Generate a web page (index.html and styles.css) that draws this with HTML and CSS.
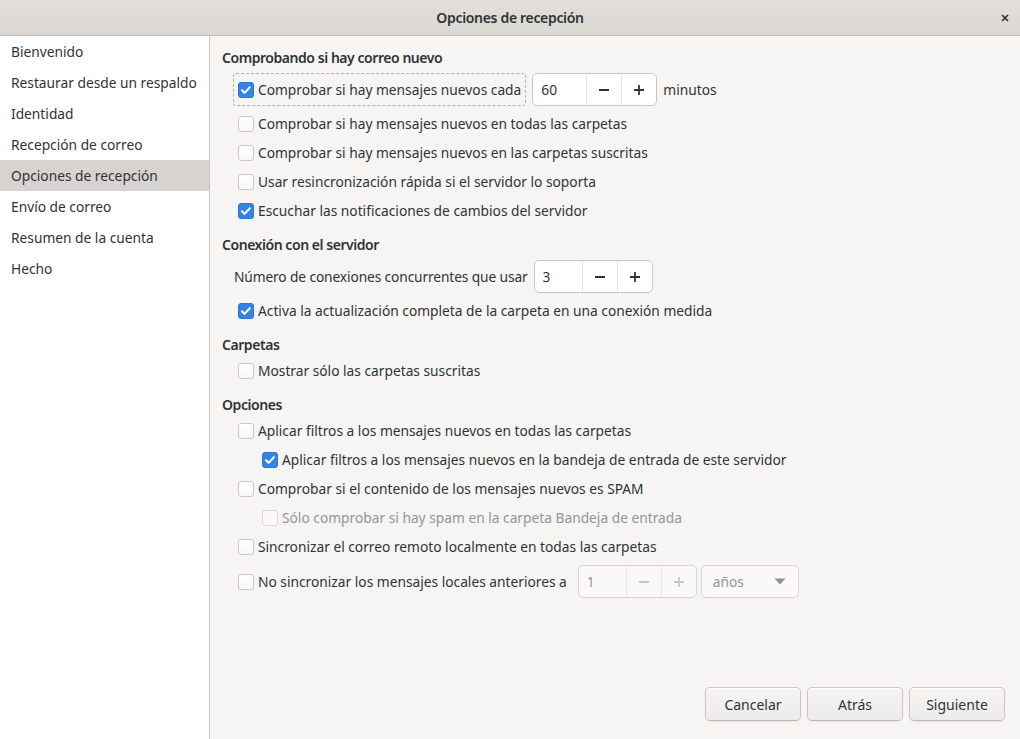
FILE: index.html
```html
<!DOCTYPE html>
<html lang="es">
<head>
<meta charset="utf-8">
<title>Opciones de recepción</title>
<link rel="stylesheet" href="styles.css">
</head>
<body>
<div class="window">
  <header class="titlebar">
    <div class="tb-side"></div>
    <div class="title">Opciones de recepción</div>
    <div class="tb-side tb-end">
      <button class="close" aria-label="Cerrar">
        <svg width="16" height="16" viewBox="0 0 16 16"><path d="M4 4l8 8M12 4l-8 8" stroke="#2e3436" stroke-width="2.2" fill="none"/></svg>
      </button>
    </div>
  </header>
  <div class="main">
    <nav class="sidebar">
      <div class="side-item">Bienvenido</div>
      <div class="side-item">Restaurar desde un respaldo</div>
      <div class="side-item">Identidad</div>
      <div class="side-item">Recepción de correo</div>
      <div class="side-item selected">Opciones de recepción</div>
      <div class="side-item">Envío de correo</div>
      <div class="side-item">Resumen de la cuenta</div>
      <div class="side-item">Hecho</div>
    </nav>
    <div class="content">
      <div class="page">
        <section class="section">
          <h2 class="heading">Comprobando si hay correo nuevo</h2>
          <div class="rows">
            <div class="row row-spin">
              <label class="check focused"><span class="box checked"><svg width="16" height="16" viewBox="0 0 16 16"><path d="M4 8.3l2.6 2.6 5.2-5.6" stroke="#fff" stroke-width="2" fill="none" stroke-linecap="round" stroke-linejoin="round"/></svg></span><span class="label">Comprobar si hay mensajes nuevos cada</span></label>
              <div class="spin"><span class="spin-entry wide">60</span><span class="spin-btn"><svg width="16" height="16" viewBox="0 0 16 16"><path d="M3 8h10" stroke="#2e3436" stroke-width="1.8"/></svg></span><span class="spin-btn"><svg width="16" height="16" viewBox="0 0 16 16"><path d="M3 8h10M8 3v10" stroke="#2e3436" stroke-width="1.8"/></svg></span></div>
              <span class="plain">minutos</span>
            </div>
            <div class="row">
              <label class="check"><span class="box"></span><span class="label">Comprobar si hay mensajes nuevos en todas las carpetas</span></label>
            </div>
            <div class="row">
              <label class="check"><span class="box"></span><span class="label">Comprobar si hay mensajes nuevos en las carpetas suscritas</span></label>
            </div>
            <div class="row">
              <label class="check"><span class="box"></span><span class="label">Usar resincronización rápida si el servidor lo soporta</span></label>
            </div>
            <div class="row">
              <label class="check"><span class="box checked"><svg width="16" height="16" viewBox="0 0 16 16"><path d="M4 8.3l2.6 2.6 5.2-5.6" stroke="#fff" stroke-width="2" fill="none" stroke-linecap="round" stroke-linejoin="round"/></svg></span><span class="label">Escuchar las notificaciones de cambios del servidor</span></label>
            </div>
          </div>
        </section>

        <section class="section">
          <h2 class="heading">Conexión con el servidor</h2>
          <div class="rows">
            <div class="row row-spin">
              <span class="plain indent-label">Número de conexiones concurrentes que usar</span>
              <div class="spin"><span class="spin-entry">3</span><span class="spin-btn"><svg width="16" height="16" viewBox="0 0 16 16"><path d="M3 8h10" stroke="#2e3436" stroke-width="1.8"/></svg></span><span class="spin-btn"><svg width="16" height="16" viewBox="0 0 16 16"><path d="M3 8h10M8 3v10" stroke="#2e3436" stroke-width="1.8"/></svg></span></div>
            </div>
            <div class="row">
              <label class="check"><span class="box checked"><svg width="16" height="16" viewBox="0 0 16 16"><path d="M4 8.3l2.6 2.6 5.2-5.6" stroke="#fff" stroke-width="2" fill="none" stroke-linecap="round" stroke-linejoin="round"/></svg></span><span class="label">Activa la actualización completa de la carpeta en una conexión medida</span></label>
            </div>
          </div>
        </section>

        <section class="section">
          <h2 class="heading">Carpetas</h2>
          <div class="rows">
            <div class="row">
              <label class="check"><span class="box"></span><span class="label">Mostrar sólo las carpetas suscritas</span></label>
            </div>
          </div>
        </section>

        <section class="section">
          <h2 class="heading">Opciones</h2>
          <div class="rows">
            <div class="row">
              <label class="check"><span class="box"></span><span class="label">Aplicar filtros a los mensajes nuevos en todas las carpetas</span></label>
            </div>
            <div class="row nested">
              <label class="check"><span class="box checked"><svg width="16" height="16" viewBox="0 0 16 16"><path d="M4 8.3l2.6 2.6 5.2-5.6" stroke="#fff" stroke-width="2" fill="none" stroke-linecap="round" stroke-linejoin="round"/></svg></span><span class="label">Aplicar filtros a los mensajes nuevos en la bandeja de entrada de este servidor</span></label>
            </div>
            <div class="row">
              <label class="check"><span class="box"></span><span class="label">Comprobar si el contenido de los mensajes nuevos es SPAM</span></label>
            </div>
            <div class="row nested">
              <label class="check disabled"><span class="box"></span><span class="label">Sólo comprobar si hay spam en la carpeta Bandeja de entrada</span></label>
            </div>
            <div class="row">
              <label class="check"><span class="box"></span><span class="label">Sincronizar el correo remoto localmente en todas las carpetas</span></label>
            </div>
            <div class="row row-spin">
              <label class="check"><span class="box"></span><span class="label">No sincronizar los mensajes locales anteriores a</span></label>
              <div class="spin disabled"><span class="spin-entry">1</span><span class="spin-btn"><svg width="16" height="16" viewBox="0 0 16 16"><path d="M3 8h10" stroke="#c8c7c5" stroke-width="1.8"/></svg></span><span class="spin-btn"><svg width="16" height="16" viewBox="0 0 16 16"><path d="M3 8h10M8 3v10" stroke="#c8c7c5" stroke-width="1.8"/></svg></span></div>
              <div class="combo disabled"><span class="combo-text">años</span><svg class="combo-arrow" width="12" height="7" viewBox="0 0 12 7"><path d="M0.5 0.5h11l-5.5 6z" fill="#8e9192"/></svg></div>
            </div>
          </div>
        </section>
      </div>
      <div class="actions">
        <button class="btn">Cancelar</button>
        <button class="btn">Atrás</button>
        <button class="btn">Siguiente</button>
      </div>
    </div>
  </div>
</div>
</body>
</html>
```

FILE: styles.css
```css
* {
  box-sizing: border-box;
}

html,
body {
  margin: 0;
  padding: 0;
}

body {
  width: 1020px;
  height: 739px;
  overflow: hidden;
  font-family: "Noto Sans", "DejaVu Sans", sans-serif;
  font-size: 13.75px;
  color: #2e3436;
  background: #f6f5f4;
}

.window {
  display: flex;
  flex-direction: column;
  height: 739px;
}

/* Title bar */
.titlebar {
  flex: none;
  height: 36px;
  display: grid;
  grid-template-columns: 1fr auto 1fr;
  align-items: center;
  background: linear-gradient(#e2dfdc, #dbd7d3);
  border-bottom: 1px solid #bfb8b1;
}

.title {
  font-weight: 600;
  font-size: 14px;
  letter-spacing: -0.33px;
  color: #2e3436;
}

.tb-end {
  display: flex;
  justify-content: flex-end;
  padding-right: 2px;
}

.close {
  width: 26px;
  height: 26px;
  border: 0;
  padding: 0;
  background: transparent;
  display: flex;
  align-items: center;
  justify-content: center;
}

.close svg {
  width: 12px;
  height: 12px;
}

/* Main area */
.main {
  flex: 1;
  display: flex;
  min-height: 0;
}

.sidebar {
  flex: none;
  width: 210px;
  background: #ffffff;
  border-right: 1px solid #cdc7c2;
}

.side-item {
  height: 31px;
  line-height: 31px;
  padding-left: 11px;
  white-space: nowrap;
}

.side-item.selected {
  background: #d6d3d0;
}

.content {
  flex: 1;
  display: flex;
  flex-direction: column;
  min-width: 0;
}

.page {
  flex: 1;
  padding: 11px 0 0 12px;
}

.section + .section {
  margin-top: 9px;
}

.heading {
  margin: 0;
  font-size: 14px;
  font-weight: 600;
  letter-spacing: -0.45px;
  line-height: 21px;
}

.rows {
  display: flex;
  flex-direction: column;
  margin-top: 1px;
}

.row {
  height: 29px;
  display: flex;
  align-items: center;
  gap: 6px;
  padding-left: 11px;
  padding-top: 1px;
  white-space: nowrap;
}

.row.nested {
  padding-left: 35px;
}

.row-spin {
  height: 40px;
  padding-top: 1px;
}

/* Check buttons */
.check {
  display: inline-flex;
  align-items: center;
  gap: 4px;
  height: 33px;
  padding: 0 4px;
  border: 1px solid transparent;
  border-radius: 3px;
  line-height: 20px;
}

.check.focused {
  border: 1px dashed rgba(46, 52, 54, 0.35);
}

.box {
  flex: none;
  width: 16px;
  height: 16px;
  border: 1px solid #cdc7c2;
  border-radius: 3px;
  background: linear-gradient(#ffffff, #f8f7f6);
  display: flex;
  align-items: center;
  justify-content: center;
}

.box.checked {
  border-color: #2a76d6;
  background: #3584e4;
}

.box svg {
  width: 16px;
  height: 16px;
  margin: -1px;
}

.check.disabled .box {
  border-color: #dcd8d4;
  background: #faf9f8;
}

.check.disabled .label {
  color: #929595;
}

.plain {
  line-height: 20px;
}

.indent-label {
  margin-left: 1px;
  letter-spacing: -0.12px;
}

/* Spin buttons */
.spin {
  flex: none;
  display: flex;
  height: 33px;
  border: 1px solid #cdc7c2;
  border-radius: 5px;
  background: #ffffff;
  overflow: hidden;
}

.spin-entry {
  width: 47px;
  padding-left: 8px;
  line-height: 31px;
}

.spin-entry.wide {
  width: 53px;
}

.spin-btn {
  width: 35px;
  border-left: 1px solid #e6e3e0;
  display: flex;
  align-items: center;
  justify-content: center;
}

.spin-btn svg {
  width: 16px;
  height: 16px;
}

.spin.disabled {
  border-color: #d8d4d0;
  background: #faf9f8;
}

.spin.disabled .spin-entry {
  color: #929595;
}

.spin.disabled .spin-btn {
  border-left-color: #e8e6e3;
}

/* Combo */
.combo {
  flex: none;
  width: 98px;
  height: 33px;
  margin-left: -2px;
  display: flex;
  align-items: center;
  justify-content: space-between;
  padding: 0 12px 0 11px;
  border: 1px solid #d8d4d0;
  border-radius: 5px;
  background: #faf9f8;
}

.combo.disabled .combo-text {
  color: #929595;
}

/* Action area */
.actions {
  flex: none;
  display: flex;
  justify-content: flex-end;
  gap: 6px;
  padding: 0 15px 18px 0;
}

.btn {
  width: 96px;
  height: 34px;
  font-family: inherit;
  font-size: 14px;
  color: #2e3436;
  border: 1px solid #cdc7c2;
  border-bottom-color: #bfb8b1;
  border-radius: 5px;
  background: linear-gradient(#f6f5f4, #edebe9);
  box-shadow: inset 0 1px #ffffff, 0 1px 2px rgba(0, 0, 0, 0.07);
  padding: 0;
}
```
